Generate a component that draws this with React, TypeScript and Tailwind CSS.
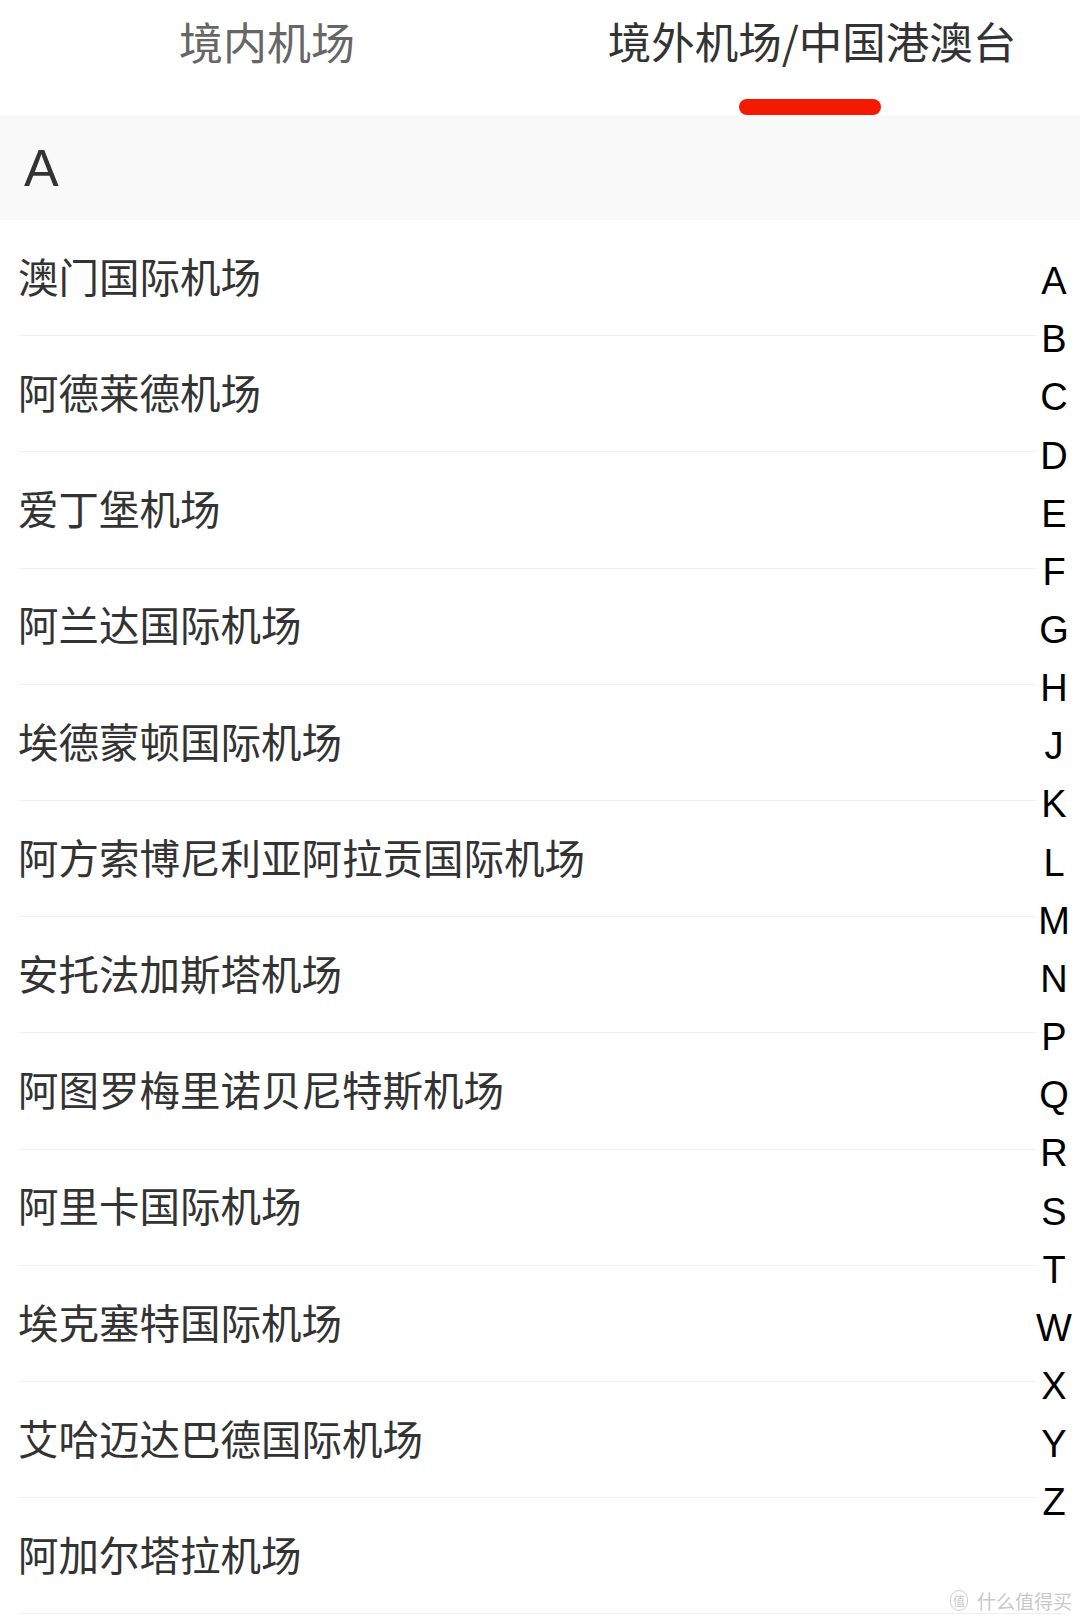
import React from "react";

const airports = [
  "澳门国际机场",
  "阿德莱德机场",
  "爱丁堡机场",
  "阿兰达国际机场",
  "埃德蒙顿国际机场",
  "阿方索博尼利亚阿拉贡国际机场",
  "安托法加斯塔机场",
  "阿图罗梅里诺贝尼特斯机场",
  "阿里卡国际机场",
  "埃克塞特国际机场",
  "艾哈迈达巴德国际机场",
  "阿加尔塔拉机场",
];

const letters = "A B C D E F G H J K L M N P Q R S T W X Y Z".split(" ");

export default function App() {
  return (
    <div
      className="relative w-[1080px] h-[1623px] bg-white overflow-hidden"
      style={{ fontFamily: '"Noto Sans CJK SC", "Noto Sans", sans-serif' }}
    >
      {/* Tabs */}
      <div className="relative h-[115px] flex">
        <div className="w-1/2 flex justify-center pt-[11px]">
          <span className="text-[44px] leading-[60px] text-[#666] mr-[6px]">境内机场</span>
        </div>
        <div className="w-1/2 flex flex-col items-center pt-[11px]">
          <span className="text-[43.5px] leading-[60px] text-[#333] ml-[4px]">境外机场/中国港澳台</span>
          <div className="mt-[28px] w-[142px] h-[16px] rounded-full bg-[#f41a00]" />
        </div>
      </div>

      {/* Section header */}
      <div className="relative h-[105px] bg-[#f9f9f9] flex items-center pl-[24px]">
        <span
          className="text-[52px] leading-none text-[#333]"
          style={{ fontFamily: '"Liberation Sans", Arial, sans-serif' }}
        >
          A
        </span>
      </div>

      {/* List */}
      <div className="flex flex-col">
        {airports.map((name) => (
          <div key={name} className="h-[116.2px] flex flex-col">
            <div className="flex-1 flex items-center pl-[18px] pb-[3px]">
              <span className="text-[40.5px] leading-none text-[#333]">{name}</span>
            </div>
            <div className="h-px ml-[19px] mr-[17px] bg-[#f0f0f0]" />
          </div>
        ))}
      </div>

      {/* Index bar */}
      <div
        className="absolute top-[252px] right-[8px] w-[36px] bg-white flex flex-col items-center"
        style={{ fontFamily: '"Liberation Sans", Arial, sans-serif' }}
      >
        {letters.map((l) => (
          <div key={l} className="h-[58.17px] flex items-center justify-center text-[38px] leading-none text-black">
            {l}
          </div>
        ))}
      </div>

      {/* Watermark */}
      <div className="absolute right-[8px] top-[1590px] flex items-center gap-[9px] text-[#c8c8c8]">
        <div className="w-[18px] h-[21px] rounded-full border border-[#cfcfcf] flex items-center justify-center text-[12px] leading-none">
          值
        </div>
        <span className="text-[19px] leading-none">什么值得买</span>
      </div>
    </div>
  );
}
